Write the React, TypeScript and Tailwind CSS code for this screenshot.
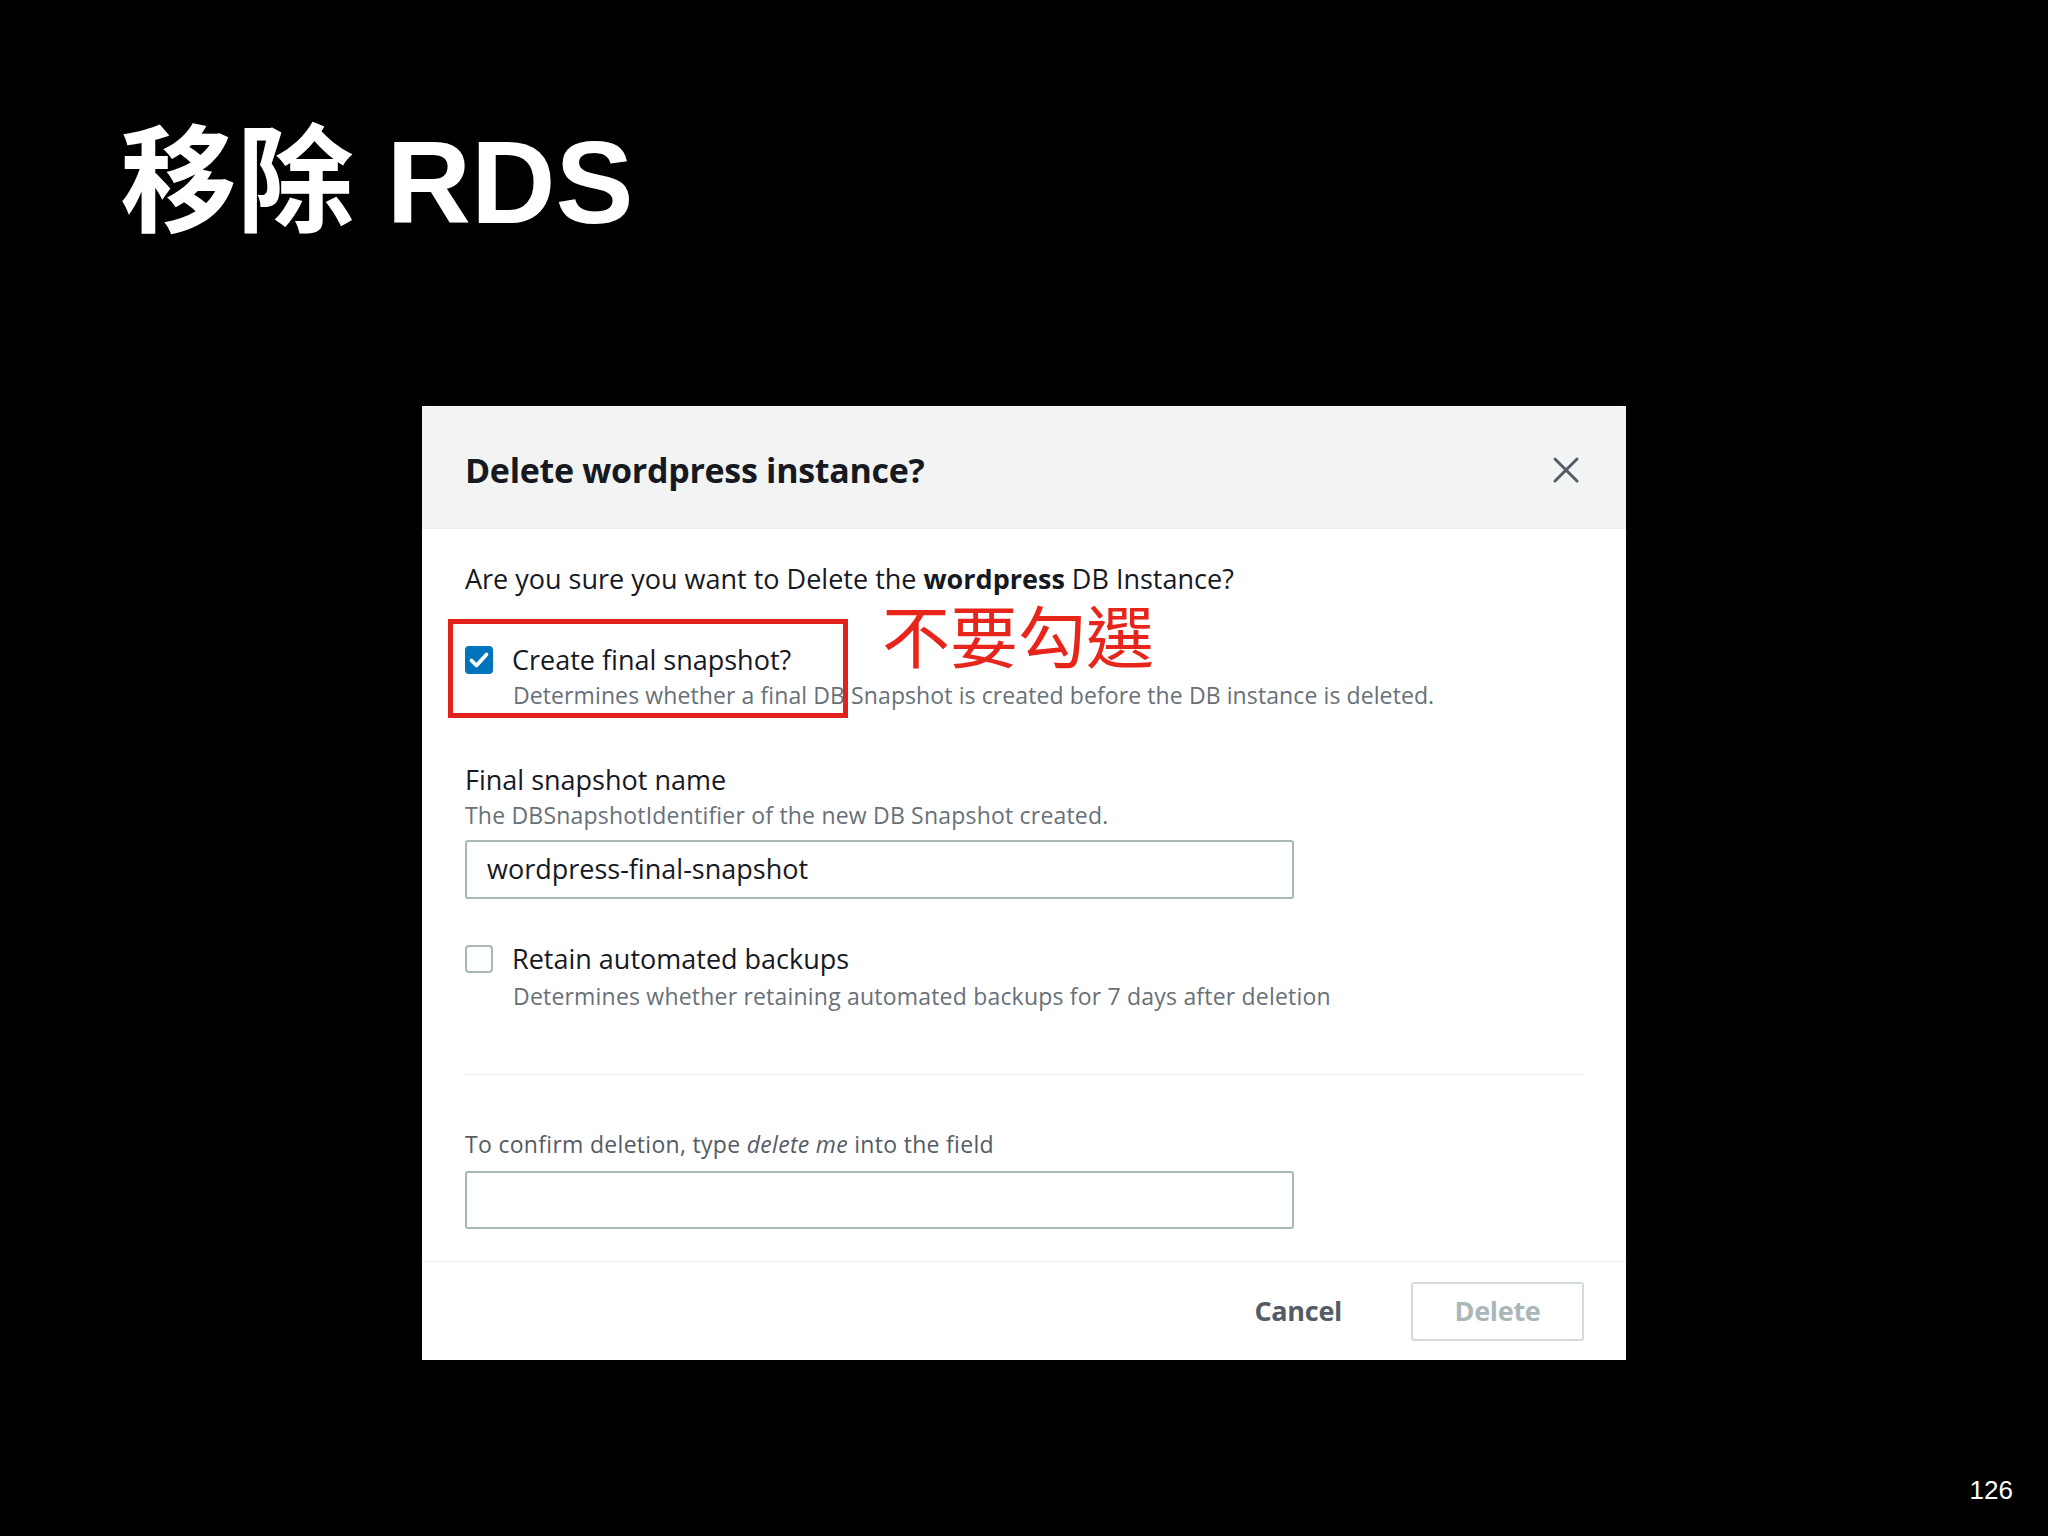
import React from "react";

function CheckIcon() {
  return (
    <svg width="28" height="28" viewBox="0 0 28 28">
      <rect x="0" y="0" width="28" height="28" rx="4" fill="#0073bb" />
      <path d="M6.5 14.5 L11.5 19.5 L21.5 8.5" stroke="#fff" strokeWidth="3.8" fill="none" strokeLinecap="round" strokeLinejoin="round" />
    </svg>
  );
}

export default function App() {
  const ui = { fontFamily: '"Open Sans", "Noto Sans", sans-serif' };
  return (
    <div className="w-[2048px] h-[1536px] bg-black overflow-hidden flex flex-col">
      <div
        className="ml-[120px] mt-[124px] text-white font-bold text-[117px] leading-none"
        style={{ fontFamily: '"Liberation Sans", "Noto Sans CJK TC", sans-serif' }}
      >
        移除 RDS
      </div>

      <div className="relative ml-[422px] mt-[165px] w-[1204px] h-[954px] bg-white flex flex-col text-[#16191f]" style={ui}>
        <div className="h-[123px] shrink-0 bg-[#f2f3f3] border-b border-[#eaeded] flex items-center justify-between pt-[6px] pl-[43px] pr-[46px]">
          <div className="text-[34px] font-bold tracking-[-0.3px] leading-none">Delete wordpress instance?</div>
          <svg width="28" height="28" viewBox="0 0 28 28">
            <path d="M3 3 L25 25 M25 3 L3 25" stroke="#545b64" strokeWidth="3" strokeLinecap="round" />
          </svg>
        </div>

        <div className="flex flex-col pl-[43px] pr-[42px] pt-[33px] pb-[32px]">
          <div className="text-[27px] leading-[34px]">
            Are you sure you want to Delete the <span className="font-bold">wordpress</span> DB Instance?
          </div>

          <div className="mt-[47px] flex items-center h-[34px]">
            <CheckIcon />
            <span className="ml-[19px] text-[27px] leading-[34px]">Create final snapshot?</span>
          </div>
          <div className="mt-[3px] ml-[48px] text-[23px] leading-[30px] text-[#687078] tracking-[0.1px]">
            Determines whether a final DB Snapshot is created before the DB instance is deleted.
          </div>

          <div className="mt-[53px] text-[27px] leading-[34px]">Final snapshot name</div>
          <div className="mt-[3px] text-[23px] leading-[30px] text-[#687078] tracking-[0.2px]">
            The DBSnapshotIdentifier of the new DB Snapshot created.
          </div>
          <div className="mt-[10px] w-[829px] h-[59px] border-2 border-[#aab7b8] rounded-[3px] flex items-center pl-[20px] text-[27px]">
            wordpress-final-snapshot
          </div>

          <div className="mt-[43px] flex items-center h-[34px]">
            <div className="w-[28px] h-[28px] border-2 border-[#aab7b8] rounded-[4px] bg-white" />
            <span className="ml-[19px] text-[27px] leading-[34px]">Retain automated backups</span>
          </div>
          <div className="mt-[5px] ml-[48px] text-[23px] leading-[30px] text-[#687078] tracking-[0.2px]">
            Determines whether retaining automated backups for 7 days after deletion
          </div>

          <div className="mt-[63px] h-px bg-[#eaeded]" />

          <div className="mt-[54px] text-[23px] leading-[30px] text-[#545b64] tracking-[0.3px]">
            To confirm deletion, type <span className="italic">delete me</span> into the field
          </div>
          <div className="mt-[12px] w-[829px] h-[58px] border-2 border-[#aab7b8] rounded-[3px]" />
        </div>

        <div className="flex-1 border-t border-[#eaeded] flex items-center justify-end pr-[42px]">
          <span className="text-[27px] font-bold text-[#545b64] tracking-[-0.3px]">Cancel</span>
          <div className="ml-[69px] w-[173px] h-[59px] border-2 border-[#d5dbdb] rounded-[3px] flex items-center justify-center text-[27px] font-bold text-[#aab7b8] tracking-[-0.3px]">
            Delete
          </div>
        </div>

        <div className="absolute left-[26px] top-[213px] w-[400px] h-[99px] border-[5px] border-[#e3231b]" />
        <div
          className="absolute left-[460px] top-[202px] text-[68px] leading-[52px] text-[#e8251b]"
          style={{ fontFamily: '"Noto Sans CJK TC", sans-serif' }}
        >
          不要勾選
        </div>
      </div>

      <div className="mt-auto mb-[33px] mr-[35px] self-end text-white text-[26px] leading-none" style={{ fontFamily: '"Liberation Sans", sans-serif' }}>
        126
      </div>
    </div>
  );
}
